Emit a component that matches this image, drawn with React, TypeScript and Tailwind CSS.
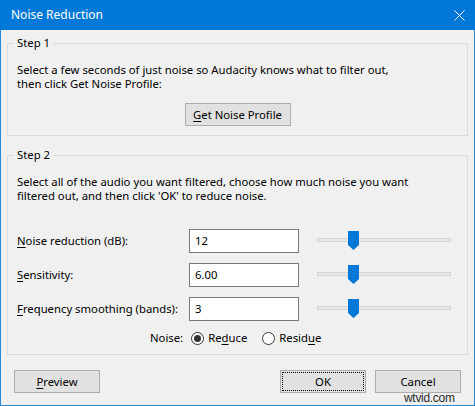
import React from "react";

const FONT = "font-['Noto_Sans','Liberation_Sans',sans-serif]";

function Key({ children }: { children: React.ReactNode }) {
  return <span className="underline underline-offset-2">{children}</span>;
}

function WinButton({
  children,
  focused = false,
  className = "",
}: {
  children: React.ReactNode;
  focused?: boolean;
  className?: string;
}) {
  return (
    <button
      type="button"
      className={
        "flex h-[23px] items-center justify-center border border-[#adadad] bg-[#e1e1e1] p-[1px] text-[11.3px] text-black " +
        className
      }
    >
      <span
        className={
          "flex h-full w-full items-center justify-center " +
          (focused ? "border border-dotted border-black" : "")
        }
      >
        {children}
      </span>
    </button>
  );
}

function Slider() {
  return (
    <div className="relative ml-[18px] h-[24px] w-[134px]">
      <div className="absolute left-0 right-0 top-[9px] h-[4px] border border-[#d6d6d6] bg-[#e7e7e7]" />
      <svg
        className="absolute left-[31px] top-[2px]"
        width="11"
        height="19"
        viewBox="0 0 11 19"
        aria-hidden="true"
      >
        <path d="M0 0H11V14L5.5 19L0 14Z" fill="#0078d7" />
      </svg>
    </div>
  );
}

function Row({ label, value }: { label: React.ReactNode; value: string }) {
  return (
    <div className="flex h-[24px] items-center">
      <span className="w-[172px] shrink-0">{label}</span>
      <div className="flex h-[24px] w-[110px] items-center border border-[#7a7a7a] bg-white pl-[5px]">
        {value}
      </div>
      <Slider />
    </div>
  );
}

function Radio({ checked, children }: { checked?: boolean; children: React.ReactNode }) {
  return (
    <span className="flex items-center gap-[4px]">
      <span className="flex size-[13px] items-center justify-center rounded-full border border-[#333] bg-white">
        {checked && <span className="size-[7px] rounded-full bg-[#333]" />}
      </span>
      <span>{children}</span>
    </span>
  );
}

export default function App() {
  return (
    <div
      className={
        "relative flex h-[406px] w-[475px] flex-col border-x border-b border-[#2b86d4] bg-[#f0f0f0] text-[11.3px] leading-[14px] text-black " +
        FONT
      }
    >
      <div className="-mx-px flex h-[30px] shrink-0 items-center justify-between bg-[#0078d7] pl-[11px] pr-[10px] text-white">
        <span className="text-[12px]">Noise Reduction</span>
        <svg width="11" height="11" viewBox="0 0 11 11" aria-hidden="true">
          <path d="M0.5 0.5L10.5 10.5M10.5 0.5L0.5 10.5" stroke="white" strokeWidth="1" />
        </svg>
      </div>

      <div className="flex flex-col px-[6px]">
        <fieldset className="mt-[5px] border border-[#dcdcdc] pl-[9px] pr-[9px] pb-[9px]">
          <legend className="-ml-[3px] px-[3px] leading-[16px]">Step 1</legend>
          <p className="mt-[12px]">
            Select a few seconds of just noise so Audacity knows what to filter out,
            <br />
            then click Get Noise Profile:
          </p>
          <div className="mt-[12px] flex justify-center">
            <WinButton className="w-[106px]">
              <span>
                <Key>G</Key>et Noise Profile
              </span>
            </WinButton>
          </div>
        </fieldset>

        <fieldset className="mt-[11px] border border-[#dcdcdc] pl-[9px] pr-[9px] pb-[8px]">
          <legend className="-ml-[3px] px-[3px] leading-[16px]">Step 2</legend>
          <p className="mt-[12px]">
            Select all of the audio you want filtered, choose how much noise you want
            <br />
            filtered out, and then click 'OK' to reduce noise.
          </p>
          <div className="mt-[26px] flex flex-col gap-[10px]">
            <Row
              label={
                <>
                  <Key>N</Key>oise reduction (dB):
                </>
              }
              value="12"
            />
            <Row
              label={
                <>
                  <Key>S</Key>ensitivity:
                </>
              }
              value="6.00"
            />
            <Row
              label={
                <>
                  <Key>F</Key>requency smoothing (bands):
                </>
              }
              value="3"
            />
          </div>
          <div className="mt-[9px] flex h-[16px] items-center pl-[133px]">
            <span className="mr-[8px]">Noise:</span>
            <Radio checked>
              Re<Key>d</Key>uce
            </Radio>
            <span className="w-[15px]" />
            <Radio>
              Resid<Key>u</Key>e
            </Radio>
          </div>
        </fieldset>

        <div className="mt-[15px] flex items-center px-[7px]">
          <WinButton className="w-[86px]">
            <span>
              <Key>P</Key>review
            </span>
          </WinButton>
          <div className="flex-1" />
          <WinButton focused className="w-[86px]">
            OK
          </WinButton>
          <WinButton className="ml-[9px] w-[86px]">Cancel</WinButton>
        </div>
      </div>

      <span className="absolute left-[403px] top-[391px] font-['Liberation_Sans',sans-serif] text-[12px] leading-[14px] tracking-[-0.3px] text-[#2a2a2a]">
        wtvid.com
      </span>
    </div>
  );
}
